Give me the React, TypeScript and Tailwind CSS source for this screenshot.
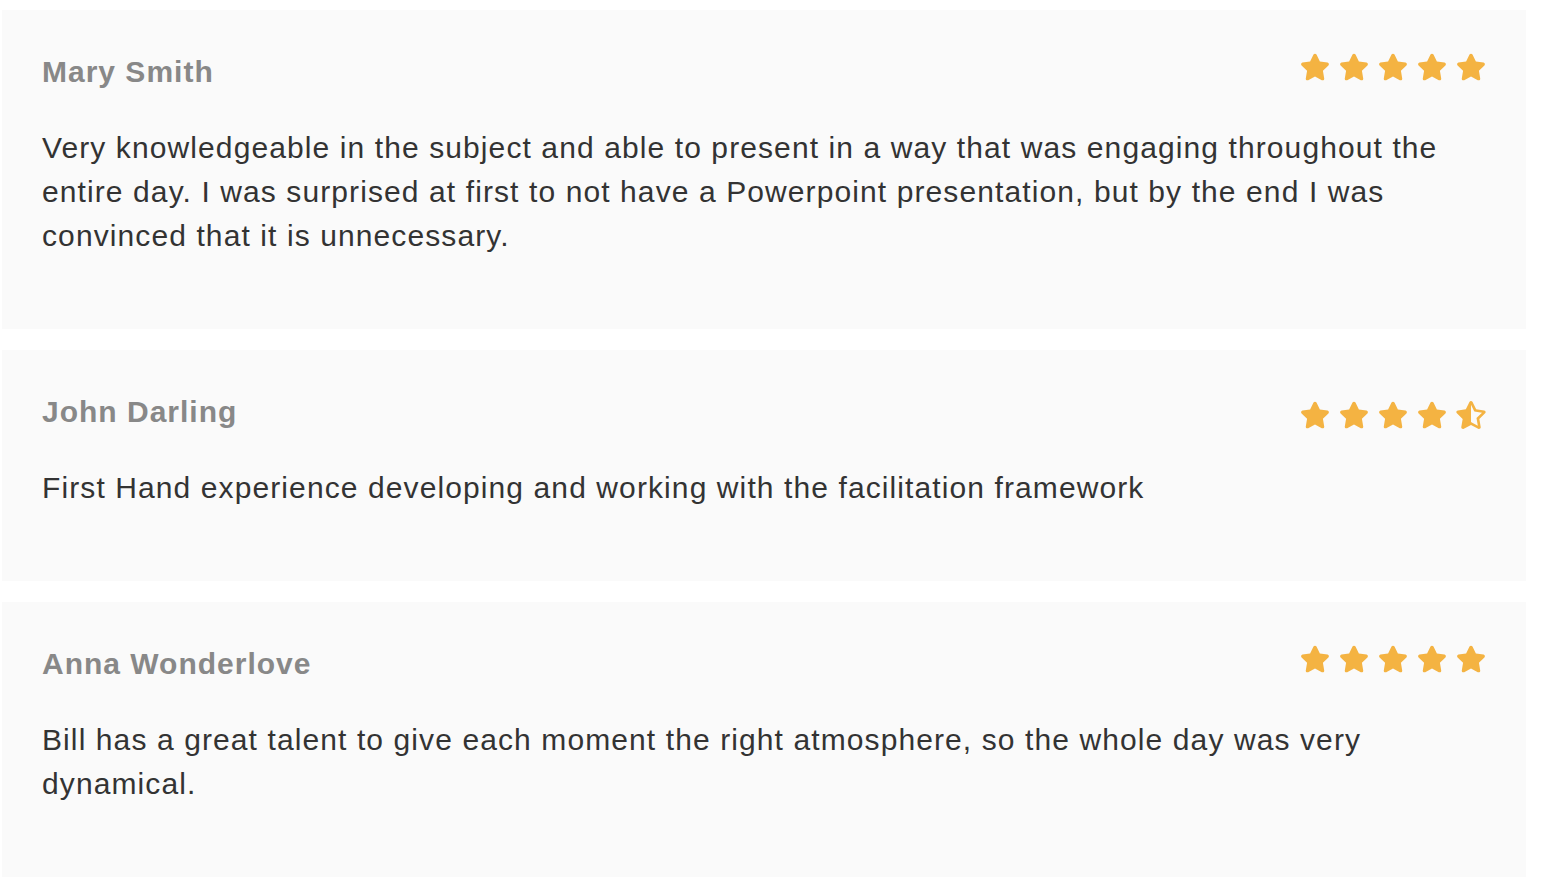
import React from 'react';
import { FaStar, FaStarHalfAlt } from 'react-icons/fa';

type Review = {
  id: number;
  name: string;
  rating: number;
  text: string;
};

const REVIEWS: Review[] = [
  {
    id: 1,
    name: 'Mary Smith',
    rating: 5,
    text: 'Very knowledgeable in the subject and able to present in a way that was engaging throughout the entire day. I was surprised at first to not have a Powerpoint presentation, but by the end I was convinced that it is unnecessary.',
  },
  {
    id: 2,
    name: 'John Darling',
    rating: 4.5,
    text: 'First Hand experience developing and working with the facilitation framework',
  },
  {
    id: 3,
    name: 'Anna Wonderlove',
    rating: 5,
    text: 'Bill has a great talent to give each moment the right atmosphere, so the whole day was very dynamical.',
  },
];

function Stars({ rating }: { rating: number }) {
  const hasHalf = rating % 1 !== 0;
  return (
    <div className={`flex items-center gap-[9px] text-[#f4b342] ${hasHalf ? 'mt-[11px]' : 'mt-[3px]'}`}>
      {[1, 2, 3, 4, 5].map((i) =>
        i <= rating ? (
          <FaStar key={i} className="w-[30px] h-[28px]" />
        ) : hasHalf && i - 0.5 <= rating ? (
          <FaStarHalfAlt key={i} className="w-[30px] h-[28px]" />
        ) : null
      )}
    </div>
  );
}

export default function App(): JSX.Element {
  return (
    <div className="w-[1542px] min-h-[890px] bg-white pt-[10px] pl-[2px] font-['Liberation_Sans',Arial,sans-serif]">
      <ul className="flex flex-col gap-[21px] w-[1524px]">
        {REVIEWS.map((review) => (
          <li key={review.id} className="bg-[#fafafa] px-10 pt-10 pb-[71px]">
            <div className="flex justify-between items-start h-[44px]">
              <h3 className="text-[30px] leading-[44px] font-bold text-[#888888] tracking-[1px]">{review.name}</h3>
              <Stars rating={review.rating} />
            </div>
            <p className="mt-8 text-[30px] leading-[44px] text-[#333333] tracking-[1.1px]">{review.text}</p>
          </li>
        ))}
      </ul>
    </div>
  );
}
